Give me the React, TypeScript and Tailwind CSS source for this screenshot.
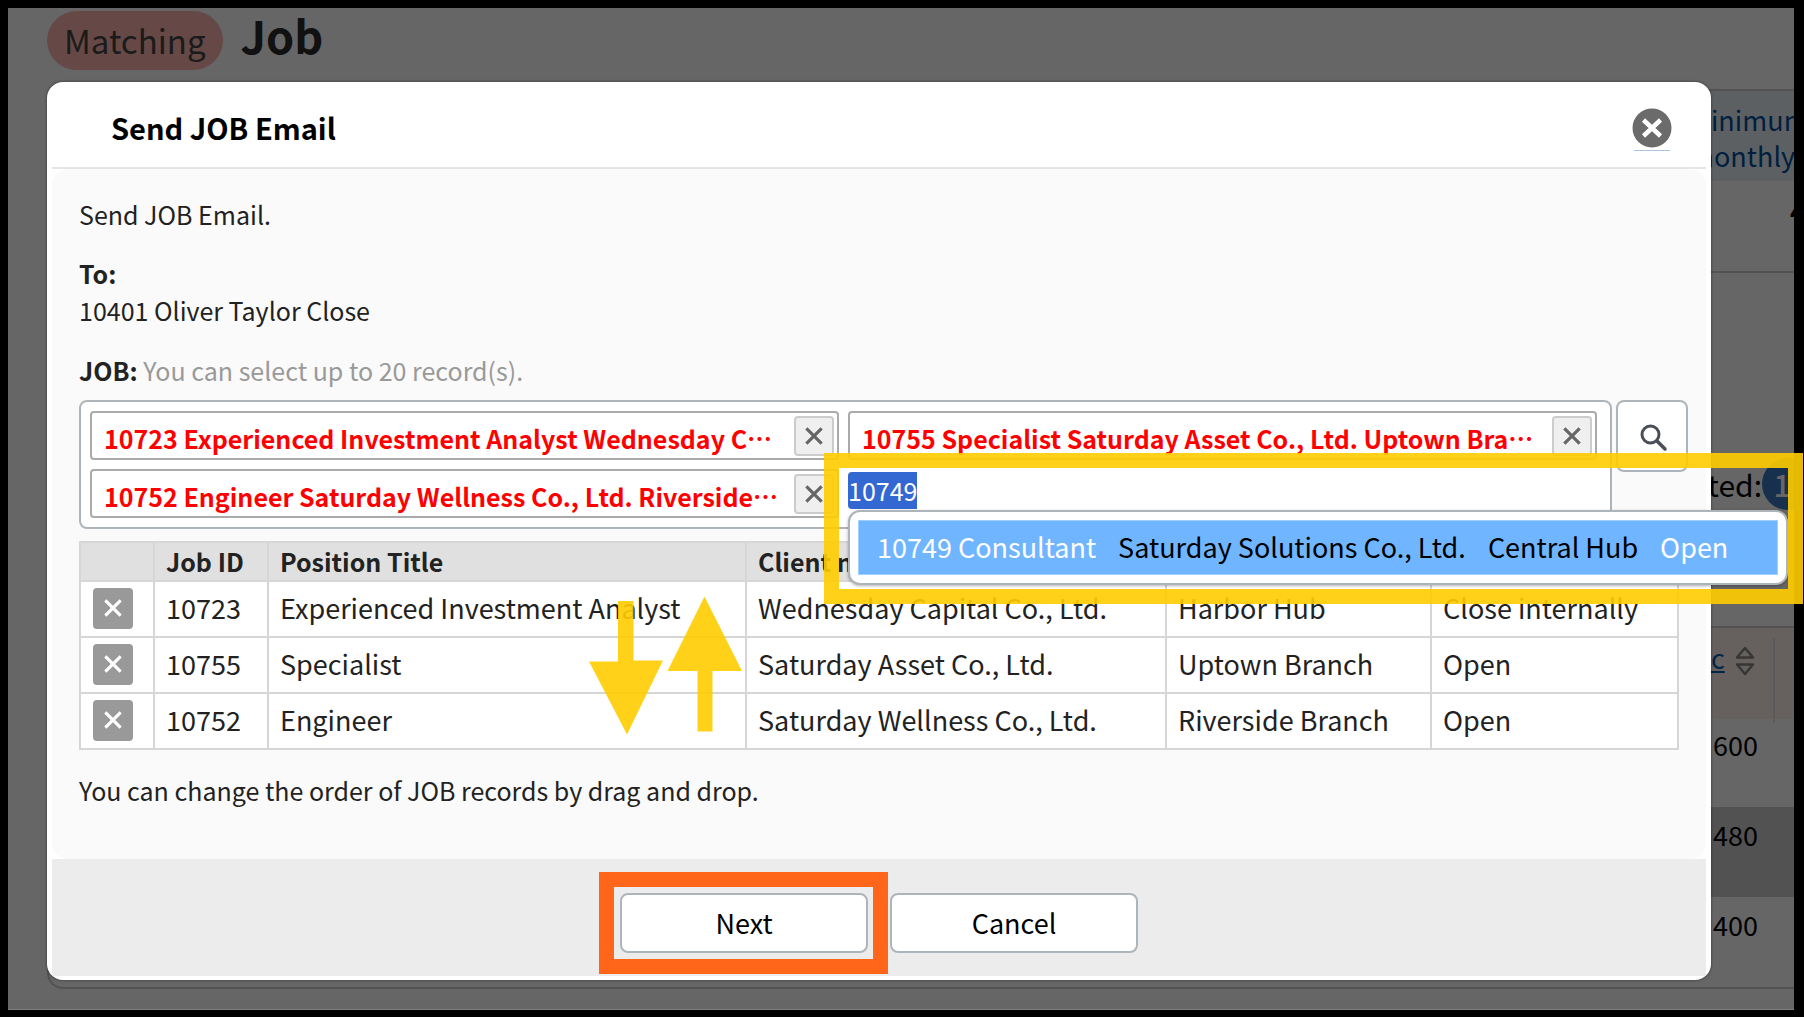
import { useEffect, useRef } from "react";
import type { ReactNode } from "react";

const jobs = [
  { id: "10723", title: "Experienced Investment Analyst", client: "Wednesday Capital Co., Ltd.", branch: "Harbor Hub", phase: "Close internally" },
  { id: "10755", title: "Specialist", client: "Saturday Asset Co., Ltd.", branch: "Uptown Branch", phase: "Open" },
  { id: "10752", title: "Engineer", client: "Saturday Wellness Co., Ltd.", branch: "Riverside Branch", phase: "Open" },
];

const tags = [
  "10723 Experienced Investment Analyst Wednesday C",
  "10755 Specialist Saturday Asset Co., Ltd. Uptown Bra",
  "10752 Engineer Saturday Wellness Co., Ltd. Riverside",
];

function Cross({ className }: { className: string }) {
  return (
    <svg viewBox="0 0 20 20" className={className} fill="none" stroke="currentColor" strokeWidth="3.500" aria-hidden="true">
      <path d="M1.500 1.500 18.500 18.500M18.500 1.500 1.500 18.500" />
    </svg>
  );
}

function Tag({ label }: { label: string }) {
  return (
    <li className="flex h-[49px] min-w-0 items-center rounded-sm border-2 border-[#aaa] bg-white pr-[3px] pl-3">
      <span lang="ja" className="min-w-0 flex-1 overflow-hidden pt-1 text-[25px] leading-9 font-bold whitespace-nowrap text-[#f00]">
        {label}⋯
      </span>
      <button type="button" aria-label="Remove" className="flex h-10 w-10 shrink-0 items-center justify-center rounded-sm border-2 border-[#ccc] bg-[#efefef] text-[#666]">
        <Cross className="h-[18px] w-[18px]" />
      </button>
    </li>
  );
}

function Th({ children, className }: { children?: ReactNode; className?: string }) {
  return <th className={`border-2 border-[#d6d6d6] px-[11px] py-0 text-left text-[25px] leading-[37px] font-bold ${className ?? ""}`}>{children}</th>;
}

function Td({ children }: { children: ReactNode }) {
  return <td className="border-2 border-[#d6d6d6] px-[11px] pt-0 pb-0.5 text-[27px] leading-[38px]">{children}</td>;
}

function PageBehind() {
  return (
    <div className="flex min-h-full flex-col pt-[3px] pl-[39px]">
      <header className="flex items-baseline gap-[18px]">
        <span className="rounded-[30px] bg-[#ffb6af] px-[17px] py-1.5 text-[33px] leading-[47px] text-[#444]">Matching</span>
        <h1 className="text-[45px] leading-[47px] font-bold text-[#2b2b2b]">Job</h1>
      </header>
      <div className="mt-[19px] ml-auto flex w-[105px] flex-col overflow-hidden whitespace-nowrap">
        <div className="border-t-2 border-[#ccc] bg-[#e8f0f7] pt-[11px] pb-[7px] text-[27px] leading-9 text-[#004f9f]">
          <p>Minimum</p>
          <p>monthly</p>
        </div>
        <p className="h-[92px] border-b-2 border-[#ccc] pt-2.5 pl-[101px] text-[26px] font-bold">4</p>
        <p className="mt-[185px] flex h-[52px] items-center justify-end text-[30px]">
          <span>Selected:</span>
          <span className="-mr-5 flex h-[52px] w-[52px] shrink-0 items-center justify-center rounded-full bg-[#3778c0] pr-3 font-medium text-white">1</span>
        </p>
      </div>
      <div className="mt-[116px] overflow-hidden rounded-bl-2xl border-b-2 border-l-2 border-[#ccc]">
        <div className="ml-auto w-[83px] overflow-hidden text-[27px] leading-10 whitespace-nowrap">
          <div className="flex h-[93px] border-t-2 border-[#ccc] bg-[#fff2ee] pt-2.5">
            <a href="#sort" className="text-[#0060b0] underline">c</a>
            <svg viewBox="0 0 20 30" className="mt-2 ml-2.5 h-[30px] w-5 shrink-0" fill="none" stroke="#888" strokeWidth="2.500" strokeLinejoin="round" aria-hidden="true">
              <path d="M10 2 18 11.500H2ZM10 28 18 18.500H2Z" />
            </svg>
            <span className="ml-[18px] h-[84px] w-0.5 shrink-0 bg-[#e0e0e8]" />
          </div>
          <p className="h-[88px] pt-1.5 pl-0.5">600</p>
          <p className="h-[90px] bg-[#ccc] pt-2 pl-0.5">480</p>
          <p className="h-[90px] pt-2 pl-0.5">400</p>
        </div>
      </div>
    </div>
  );
}

export default function App() {
  const input = useRef<HTMLInputElement>(null);
  useEffect(() => {
    input.current?.focus({ preventScroll: true });
    input.current?.select();
  }, []);

  return (
    <div className="flex min-h-screen flex-col overflow-hidden bg-black pt-2 pr-2.5 pb-[7px] pl-2 font-['Noto_Sans_CJK_JP','Noto_Sans',sans-serif] text-[#222]">
      <div className="relative grid flex-1 border-b border-[#808080] bg-white">
        <div className="col-start-1 row-start-1 overflow-hidden text-black">
          <PageBehind />
        </div>
        <div className="absolute inset-0 bg-black/60" />

        <section role="dialog" aria-labelledby="dialog-title" className="relative col-start-1 row-start-1 mt-[74px] mr-[83px] mb-7 ml-[39px] flex flex-col self-start rounded-2xl bg-white px-[5px] pb-1 shadow-[0_0_3px_rgba(0,0,0,0.5)]">
          <header className="flex items-center justify-between border-b-2 border-[#e5e5e5] pt-[5px] pr-9 pl-[59px]">
            <h2 id="dialog-title" className="py-5 text-[29px] leading-10 font-bold text-black">Send JOB Email</h2>
            <a href="#close" aria-label="Close" className="mt-1 border-b border-[#adc0dd] pb-0.5">
              <svg viewBox="0 0 40 40" className="-mx-0.5 h-10 w-10" aria-hidden="true">
                <circle cx="20" cy="20" r="19.500" fill="#6b6b6b" />
                <path d="M11.500 12 28.500 28M28.500 12 11.500 28" stroke="#fff" strokeWidth="4.500" />
              </svg>
            </a>
          </header>

          <div className="rounded-2xl bg-[#fafafa] pt-[27px] pr-[18px] pb-[50px] pl-[27px] text-[25px] leading-[37px]">
            <p>Send JOB Email.</p>
            <p className="mt-[22px] font-bold">To:</p>
            <p>10401 Oliver Taylor Close</p>
            <p className="mt-[23px] text-[#999]">
              <label htmlFor="job-input" className="font-bold text-[#222]">JOB:</label> You can select up to 20 record(s).
            </p>

            <div className="mt-[11px] flex items-start gap-1">
              <ul className="grid flex-1 grid-cols-2 gap-[9px] rounded-lg border-2 border-[#adb5bb] bg-white py-[9px] pr-[13px] pl-[9px]">
                {tags.map((t) => (
                  <Tag key={t} label={t} />
                ))}
                <li className="relative min-w-0">
                  <input id="job-input" ref={input} defaultValue="10749" className="mt-[3px] block h-[37px] w-full rounded-sm bg-white text-[25px] leading-[37px] outline-none selection:bg-[#3367d1] selection:text-white" />
                  <div className="absolute top-[41px] left-0 z-10 rounded-xl border-2 border-[#adb5bb] bg-white p-2 shadow-[0_1px_3px_rgba(0,0,0,0.3)]">
                    <button type="button" className="flex w-[920px] gap-[22px] border border-[#a0d0ff] bg-[#70b5ff] px-[18px] pt-1.5 pb-[7px] text-left text-[27px] leading-10 whitespace-nowrap text-black">
                      <span className="text-white">10749 Consultant</span>
                      <span>Saturday Solutions Co., Ltd.</span>
                      <span>Central Hub</span>
                      <span className="text-white">Open</span>
                    </button>
                  </div>
                  <div className="pointer-events-none absolute -top-4 -left-6 z-20 h-[151px] w-[979px] border-[15px] border-[#ffcd00]/90" />
                </li>
              </ul>
              <button type="button" aria-label="Search" className="flex h-[72px] w-[72px] shrink-0 items-center justify-center rounded-lg border-2 border-[#adb5bb] bg-white">
                <svg viewBox="0 0 28 28" className="mt-1 ml-1 h-7 w-7" fill="none" stroke="#4a4f57" strokeLinecap="round" aria-hidden="true">
                  <circle cx="10.500" cy="10.500" r="8.500" strokeWidth="3" />
                  <path d="m17 17 8 8" strokeWidth="3.500" />
                </svg>
              </button>
            </div>

            <div className="relative mt-3 mr-[9px]">
              <table className="w-full table-fixed border-collapse bg-white">
                <thead className="bg-[#e0e0e0]">
                  <tr>
                    <Th className="w-[74px]" />
                    <Th className="w-[114px]">Job ID</Th>
                    <Th className="w-[478px]">Position Title</Th>
                    <Th className="w-[420px]">Client name</Th>
                    <Th className="w-[265px]">Branch</Th>
                    <Th>Phase</Th>
                  </tr>
                </thead>
                <tbody>
                  {jobs.map((j) => (
                    <tr key={j.id} className="h-14">
                      <Td>
                        <button type="button" aria-label={`Remove ${j.id}`} className="ml-px flex h-[41px] w-10 items-center justify-center rounded bg-[#999] text-white">
                          <Cross className="h-[18px] w-[18px]" />
                        </button>
                      </Td>
                      <Td>{j.id}</Td>
                      <Td>{j.title}</Td>
                      <Td>{j.client}</Td>
                      <Td>{j.branch}</Td>
                      <Td>{j.phase}</Td>
                    </tr>
                  ))}
                </tbody>
              </table>
              <svg viewBox="0 0 154 140" className="pointer-events-none absolute top-[55px] left-[510px] h-[140px] w-[154px]" fill="#ffcd00" fillOpacity="0.9" aria-hidden="true">
                <path d="M29 5H44.500V64.500H74L38 138.500 0 65.500H29Z" />
                <path d="M115.500 0.500 153 75H123.500V135.500H108.500V75H78.500Z" />
              </svg>
            </div>
            <p className="mt-[22px]">You can change the order of JOB records by drag and drop.</p>
          </div>

          <footer className="flex justify-center gap-[22px] bg-[#ececec] pt-[34px] pb-[23px] text-[27px] leading-10 text-black">
            <div className="relative">
              <button type="button" className="h-[60px] w-[248px] rounded-lg border-2 border-[#adb5bb] bg-white">Next</button>
              <div className="pointer-events-none absolute -top-[21px] -left-[21px] h-[102px] w-[289px] border-[15px] border-[#ff661a]" />
            </div>
            <button type="button" className="h-[60px] w-[248px] rounded-lg border-2 border-[#adb5bb] bg-white">Cancel</button>
          </footer>
        </section>
      </div>
    </div>
  );
}
